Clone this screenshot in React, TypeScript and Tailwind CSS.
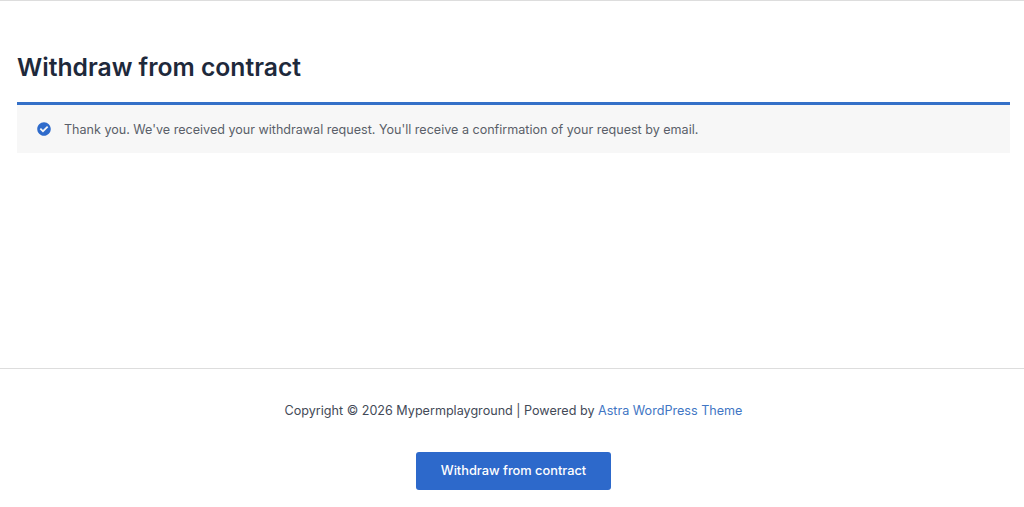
export default function App() {
  return (
    <div className="h-[507px] w-[1024px] overflow-hidden bg-white font-['Inter',sans-serif] flex flex-col">
      <main className="h-[369px] shrink-0 border-t border-b border-[#dddddd] pl-[17px] pr-[14px] pt-[50px]">
        <h1 className="text-[24.7px] leading-[32px] font-semibold text-[#1e293b]">Withdraw from contract</h1>
        <div className="mt-[19px] h-[51px] border-t-[3px] border-[#3470c8] bg-[#f7f7f7] flex items-center pl-[20px]">
          <svg viewBox="0 0 512 512" className="w-[14px] h-[14px] shrink-0" fill="#2f6bcb">
            <path d="M256 8C119 8 8 119 8 256s111 248 248 248 248-111 248-248S393 8 256 8zm-38 378L100 268l46-46 72 72 148-148 46 46-194 194z" />
          </svg>
          <p className="ml-[13px] pt-px text-[12.57px] leading-[20px] text-[#5a5f69]">
            Thank you. We've received your withdrawal request. You'll receive a confirmation of your request by email.
          </p>
        </div>
      </main>
      <footer className="flex flex-col items-center pt-[32px] pl-[3px]">
        <p className="text-[12.6px] leading-[20px] text-[#434a57]">
          Copyright © 2026 Mypermplayground | Powered by <a className="text-[#4176c4]">Astra WordPress Theme</a>
        </p>
        <button className="mt-[31px] w-[195px] h-[38px] rounded-[3px] bg-[#2d69cb] text-white text-[12.8px] font-medium">
          Withdraw from contract
        </button>
      </footer>
    </div>
  );
}
